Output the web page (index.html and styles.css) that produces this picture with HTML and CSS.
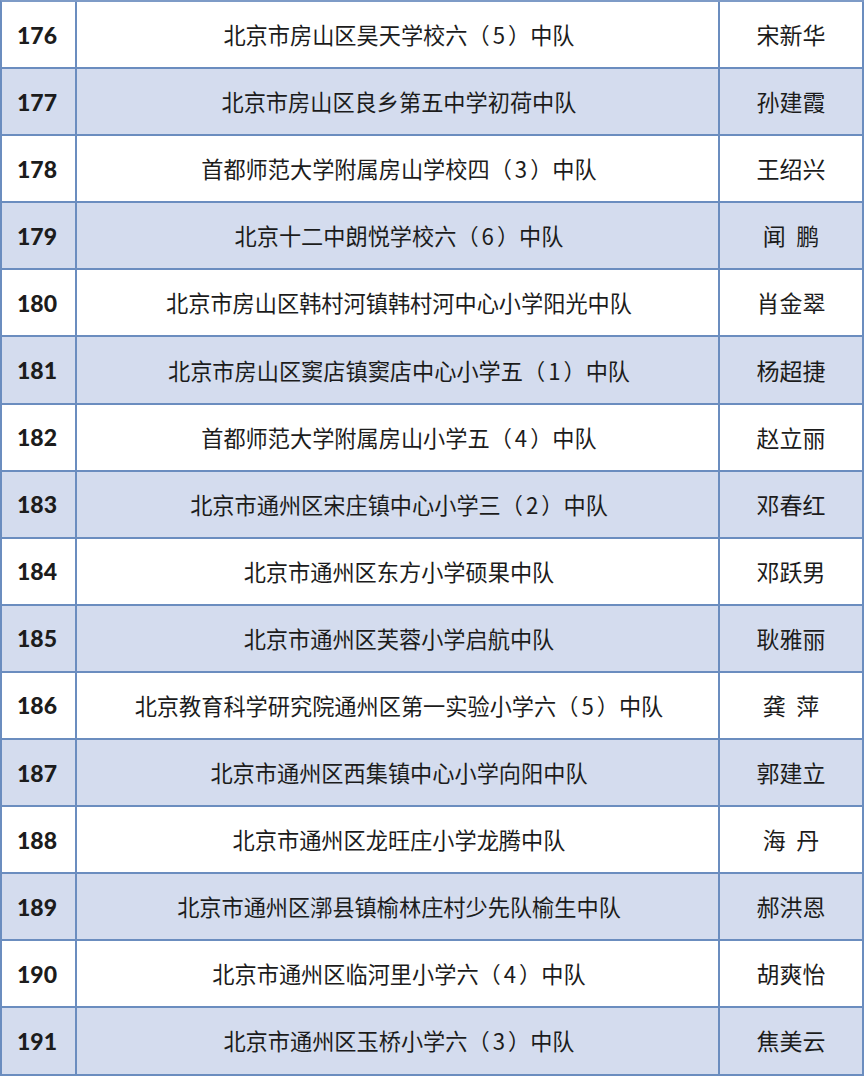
FILE: index.html
```html
<!DOCTYPE html>
<html lang="zh-CN">
<head>
<meta charset="utf-8">
<link rel="stylesheet" href="styles.css">
</head>
<body>
<div class="grid">
  <div class="row"><div class="num">176</div><div class="unit">北京市房山区昊天学校六（<span class="d">5</span>）中队</div><div class="name">宋新华</div></div>
  <div class="row band"><div class="num">177</div><div class="unit">北京市房山区良乡第五中学初荷中队</div><div class="name">孙建霞</div></div>
  <div class="row"><div class="num">178</div><div class="unit">首都师范大学附属房山学校四（<span class="d">3</span>）中队</div><div class="name">王绍兴</div></div>
  <div class="row band"><div class="num">179</div><div class="unit">北京十二中朗悦学校六（<span class="d">6</span>）中队</div><div class="name">闻  鹏</div></div>
  <div class="row"><div class="num">180</div><div class="unit">北京市房山区韩村河镇韩村河中心小学阳光中队</div><div class="name">肖金翠</div></div>
  <div class="row band"><div class="num">181</div><div class="unit">北京市房山区窦店镇窦店中心小学五（<span class="d">1</span>）中队</div><div class="name">杨超捷</div></div>
  <div class="row"><div class="num">182</div><div class="unit">首都师范大学附属房山小学五（<span class="d">4</span>）中队</div><div class="name">赵立丽</div></div>
  <div class="row band"><div class="num">183</div><div class="unit">北京市通州区宋庄镇中心小学三（<span class="d">2</span>）中队</div><div class="name">邓春红</div></div>
  <div class="row"><div class="num">184</div><div class="unit">北京市通州区东方小学硕果中队</div><div class="name">邓跃男</div></div>
  <div class="row band"><div class="num">185</div><div class="unit">北京市通州区芙蓉小学启航中队</div><div class="name">耿雅丽</div></div>
  <div class="row"><div class="num">186</div><div class="unit">北京教育科学研究院通州区第一实验小学六（<span class="d">5</span>）中队</div><div class="name">龚  萍</div></div>
  <div class="row band"><div class="num">187</div><div class="unit">北京市通州区西集镇中心小学向阳中队</div><div class="name">郭建立</div></div>
  <div class="row"><div class="num">188</div><div class="unit">北京市通州区龙旺庄小学龙腾中队</div><div class="name">海  丹</div></div>
  <div class="row band"><div class="num">189</div><div class="unit">北京市通州区漷县镇榆林庄村少先队榆生中队</div><div class="name">郝洪恩</div></div>
  <div class="row"><div class="num">190</div><div class="unit">北京市通州区临河里小学六（<span class="d">4</span>）中队</div><div class="name">胡爽怡</div></div>
  <div class="row band"><div class="num">191</div><div class="unit">北京市通州区玉桥小学六（<span class="d">3</span>）中队</div><div class="name">焦美云</div></div>
</div>
</body>
</html>
```
FILE: styles.css
```css
html, body {
  margin: 0;
  padding: 0;
  background: #ffffff;
}
.grid {
  width: 864px;
  box-sizing: border-box;
  border-left: 2px solid #6b8dbf;
  border-top: 2px solid #7e9bc7;
  display: grid;
  grid-template-columns: 75px 643px 144px;
  grid-auto-rows: 67.1px;
}
.row {
  display: contents;
}
.row > div {
  box-sizing: border-box;
  border-right: 2px solid #6b8dbf;
  border-bottom: 2px solid #6b8dbf;
  display: flex;
  align-items: center;
  justify-content: center;
  color: #1c1c1c;
  background: #ffffff;
}
.row.band > div {
  background: #d4dcee;
}
.num {
  font-family: Lato, "Liberation Sans", sans-serif;
  font-weight: 900;
  font-size: 23px;
  color: #111111;
  padding-right: 3px;
}
.unit, .name {
  font-family: "Noto Sans CJK SC", sans-serif;
  font-size: 22.2px;
  font-weight: 400;
  padding-bottom: 1px;
  white-space: pre;
}
.unit {
  padding-left: 3px;
}
.d {
  margin: 0 3px;
}
.name {
  font-size: 23px;
}
```
